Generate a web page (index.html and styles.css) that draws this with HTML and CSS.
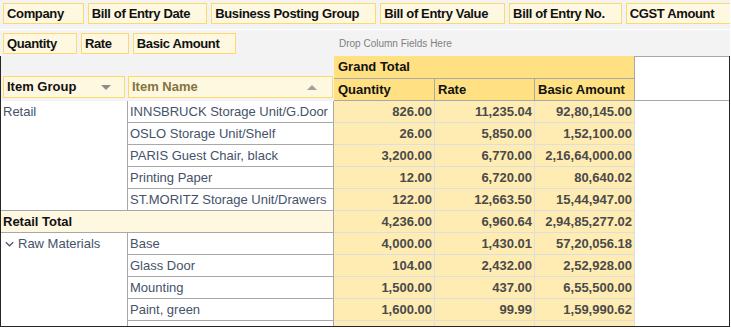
FILE: index.html
```html
<!DOCTYPE html>
<html lang="en">
<head>
<meta charset="utf-8">
<title>Pivot Grid</title>
<link rel="stylesheet" href="styles.css">
</head>
<body>
<div class="pivot">
  <div class="filter-area">
    <span class="field wide">Company</span>
    <span class="field">Bill of Entry Date</span>
    <span class="field">Business Posting Group</span>
    <span class="field">Bill of Entry Value</span>
    <span class="field">Bill of Entry No.</span>
    <span class="field">CGST Amount</span>
  </div>
  <div class="data-area">
    <div class="data-fields">
      <span class="field wide">Quantity</span>
      <span class="field">Rate</span>
      <span class="field">Basic Amount</span>
    </div>
    <div class="drop-hint">Drop Column Fields Here</div>
  </div>
  <div class="grid">
    <div class="row-header-area">
      <div class="hdr-field hf-group"><span>Item Group</span><svg class="sort" width="10" height="5" viewBox="0 0 10 5"><polygon points="0,0 10,0 5,5" fill="#8c8c8c"/></svg></div>
      <div class="hdr-field hf-name"><span>Item Name</span><svg class="sort" width="10" height="5" viewBox="0 0 10 5"><polygon points="0,5 10,5 5,0" fill="#a0a0a0"/></svg></div>
    </div>
    <div class="grand-total">Grand Total</div>
    <div class="corner"></div>
    <div class="col-hdr first">Quantity</div>
    <div class="col-hdr">Rate</div>
    <div class="col-hdr">Basic Amount</div>

    <div class="group span5">Retail</div>
    <div class="name">INNSBRUCK Storage Unit/G.Door</div><div class="num">826.00</div><div class="num">11,235.04</div><div class="num">92,80,145.00</div>
    <div class="name">OSLO Storage Unit/Shelf</div><div class="num">26.00</div><div class="num">5,850.00</div><div class="num">1,52,100.00</div>
    <div class="name">PARIS Guest Chair, black</div><div class="num">3,200.00</div><div class="num">6,770.00</div><div class="num">2,16,64,000.00</div>
    <div class="name">Printing Paper</div><div class="num">12.00</div><div class="num">6,720.00</div><div class="num">80,640.02</div>
    <div class="name">ST.MORITZ Storage Unit/Drawers</div><div class="num">122.00</div><div class="num">12,663.50</div><div class="num">15,44,947.00</div>

    <div class="total-label">Retail Total</div><div class="num">4,236.00</div><div class="num">6,960.64</div><div class="num">2,94,85,277.02</div>

    <div class="group span5"><svg class="chev" width="9" height="6" viewBox="0 0 9 6"><path d="M0.8 1.2 L4.5 4.8 L8.2 1.2" fill="none" stroke="#4a5668" stroke-width="1.2"/></svg>Raw Materials</div>
    <div class="name">Base</div><div class="num">4,000.00</div><div class="num">1,430.01</div><div class="num">57,20,056.18</div>
    <div class="name">Glass Door</div><div class="num">104.00</div><div class="num">2,432.00</div><div class="num">2,52,928.00</div>
    <div class="name">Mounting</div><div class="num">1,500.00</div><div class="num">437.00</div><div class="num">6,55,500.00</div>
    <div class="name">Paint, green</div><div class="num">1,600.00</div><div class="num">99.99</div><div class="num">1,59,990.62</div>
    <div class="name partial"></div><div class="num"></div><div class="num"></div><div class="num"></div>
  </div>
</div>
</body>
</html>
```
FILE: styles.css
```css
* { box-sizing: border-box; }
html, body { margin: 0; padding: 0; background: #ffffff; }
body {
  font-family: "Liberation Sans", Arial, sans-serif;
  font-size: 13px;
  color: #111;
}
.pivot {
  width: 730px;
  background: #f3f3f3;
}
.filter-area {
  height: 30px;
  padding: 3px 0 0 3px;
  display: flex;
  gap: 4px;
  overflow: hidden;
  white-space: nowrap;
  border-bottom: 1px solid #ffffff;
}
.field {
  flex: none;
  display: block;
  height: 21px;
  line-height: 19px;
  padding: 0 16px 0 3px;
  border: 1px solid #fdd86a;
  background: #fff8e1;
  font-weight: bold;
  letter-spacing: -0.35px;
  color: #111;
}
.field.wide { padding-right: 19px; }
.data-area {
  height: 26px;
  display: flex;
  align-items: flex-start;
}
.data-fields {
  width: 334px;
  padding: 3px 0 0 3px;
  display: flex;
  gap: 4px;
}
.drop-hint {
  margin-left: 5px;
  font-size: 10px;
  line-height: 27px;
  color: #808080;
}
.grid {
  display: grid;
  grid-template-columns: 127px 206px 101px 100px 100px 94px;
  grid-template-rows: 23px 22px repeat(11, 22px);
  height: 271px;
  overflow: hidden;
  background: #ffffff;
  border-left: 1px solid #262626;
  border-right: 1px solid #262626;
  border-bottom: 1px solid #262626;
  line-height: 21px;
}
.row-header-area {
  grid-column: 1 / span 2;
  grid-row: 1 / span 2;
  background: #f3f3f3;
  display: flex;
  align-items: flex-end;
  gap: 3px;
  padding: 0 0 3px 2px;
}
.hdr-field {
  height: 22px;
  line-height: 20px;
  border: 1px solid #fdd86a;
  background: #fff8e1;
  font-weight: bold;
  display: flex;
  align-items: center;
  padding: 0 0 0 3px;
  white-space: nowrap;
}
.hf-group { width: 122px; color: #111; }
.hf-name { width: 205px; color: #85733b; }
.hdr-field .sort { margin-left: auto; margin-right: 13px; }
.hf-name .sort { margin-right: 15px; }
.grand-total {
  grid-column: 3 / span 3;
  grid-row: 1;
  background: #ffe082;
  border-bottom: 1px solid #a8a8a8;
  border-right: 1px solid #a8a8a8;
  font-weight: bold;
  padding-left: 4px;
  line-height: 22px;
}
.corner {
  grid-column: 6;
  grid-row: 1 / span 2;
  background: #ffffff;
  border-top: 1px solid #a8a8a8;
  border-bottom: 1px solid #a8a8a8;
}
.col-hdr {
  grid-row: 2;
  background: #ffe082;
  border-right: 1px solid #a8a8a8;
  border-bottom: 1px solid #a8a8a8;
  font-weight: bold;
  padding-left: 3px;
}
.col-hdr.first { padding-left: 4px; }
.group {
  grid-column: 1;
  border-right: 1px solid #a8a8a8;
  border-bottom: 1px solid #a8a8a8;
  padding-left: 2px;
  color: #45526a;
  display: flex;
  align-items: flex-start;
  white-space: nowrap;
}
.group.span5 { grid-row: span 5; }
.chev { margin: 8px 4px 0 2px; flex: none; }
.name {
  grid-column: 2;
  border-right: 1px solid #a8a8a8;
  border-bottom: 1px solid #a8a8a8;
  padding-left: 2px;
  color: #45526a;
  white-space: nowrap;
  overflow: hidden;
}
.num {
  background: #ffecb3;
  border-right: 1px solid #dedede;
  border-bottom: 1px solid #dedede;
  text-align: right;
  padding-right: 2px;
  font-weight: bold;
  color: #4a4a4a;
}
.total-label {
  grid-column: 1 / span 2;
  background: #fff8e1;
  border-right: 1px solid #a8a8a8;
  border-bottom: 1px solid #a8a8a8;
  padding-left: 2px;
  font-weight: bold;
  color: #111;
}
```
